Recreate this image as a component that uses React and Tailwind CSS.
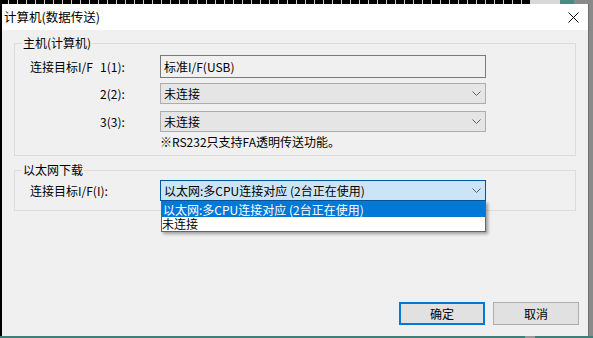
import React from "react";

const Chevron = () => (
  <svg width="9" height="5" viewBox="0 0 9 5" className="shrink-0">
    <path d="M0.5 0.5 L4.5 4.5 L8.5 0.5" fill="none" stroke="#606060" strokeWidth="1" />
  </svg>
);

const Combo = ({ text, focused }) => (
  <div
    className={`w-[326px] h-[21px] flex items-center justify-between pl-[3px] pr-[4px] border ${
      focused ? "bg-[#cce4f7] border-[#005499]" : "bg-[#e5e5e5] border-[#adadad]"
    }`}
  >
    <span className="leading-[16px] text-black">{text}</span>
    <Chevron />
  </div>
);

export default function App() {
  return (
    <div className="w-[593px] h-[338px] flex flex-col bg-black font-['Noto_Sans_CJK_SC',sans-serif] text-[12px] text-black overflow-hidden">
      {/* desktop strip above the window */}
      <div className="h-[4px] flex">
        <div className="w-[530px] bg-[repeating-linear-gradient(90deg,#000_0px,#000_8px,#cfcfcf_8px,#cfcfcf_9px)]" />
        <div className="w-[30px] bg-[#d8d8d8]" />
        <div className="w-[14px] bg-[#4a8a84]" />
        <div className="flex-1 bg-[#8a8a8a]" />
      </div>

      <div className="flex flex-1 min-h-0">
        <div className="w-[2px] bg-black" />

        {/* dialog window */}
        <div className="w-[587px] flex flex-col border-r border-[#6e6e6e]">
          {/* title bar */}
          <div className="h-[26px] bg-white flex items-center justify-between pl-[2px] pr-[9px]">
            <span className="text-[12.5px] leading-[16px]">计算机(数据传送)</span>
            <svg width="11" height="11" viewBox="0 0 11 11">
              <path d="M0.5 0.5 L10.5 10.5 M10.5 0.5 L0.5 10.5" stroke="#000" strokeWidth="1" />
            </svg>
          </div>

          {/* client area */}
          <div className="flex-1 bg-[#f0f0f0] flex flex-col">
            <fieldset className="mx-[12px] mt-[5px] border border-[#dcdcdc] pb-[5px]">
              <legend className="ml-[7px] px-[1px] leading-[16px]">主机(计算机)</legend>

              <div className="flex items-center mt-[4px] pl-[15px]">
                <span className="w-[70px] leading-[16px]">连接目标I/F</span>
                <span className="w-[60px] leading-[16px]">1(1):</span>
                <div className="w-[326px] h-[23px] flex items-center pl-[3px] bg-[#f0f0f0] border border-[#7a7a7a]">
                  <span className="leading-[16px]">标准I/F(USB)</span>
                </div>
              </div>

              <div className="flex items-center mt-[5px] pl-[15px]">
                <span className="w-[70px]" />
                <span className="w-[60px] leading-[16px]">2(2):</span>
                <Combo text="未连接" />
              </div>

              <div className="flex items-center mt-[7px] pl-[15px]">
                <span className="w-[70px]" />
                <span className="w-[60px] leading-[16px]">3(3):</span>
                <Combo text="未连接" />
              </div>

              <div className="mt-[2px] pl-[145px] leading-[16px]">※RS232只支持FA透明传送功能。</div>
            </fieldset>

            <fieldset className="mx-[12px] mt-[6px] border border-[#dcdcdc] pb-[9px]">
              <legend className="ml-[7px] px-[1px] leading-[16px]">以太网下载</legend>

              <div className="flex items-center mt-[2px] pl-[15px]">
                <span className="w-[130px] leading-[16px]">连接目标I/F(I):</span>
                <div className="relative">
                  <Combo text="以太网:多CPU连接对应 (2台正在使用)" focused />
                  {/* open dropdown list */}
                  <div className="absolute left-[1px] top-full w-[325px] z-10 bg-white border border-[#646464] shadow-[2px_2px_3px_rgba(0,0,0,0.35)]">
                    <div className="h-[15px] bg-[#0078d7] text-white leading-[15px] pl-[1px]">
                      以太网:多CPU连接对应 (2台正在使用)
                    </div>
                    <div className="h-[14px] leading-[14px]">未连接</div>
                  </div>
                </div>
              </div>
            </fieldset>

            {/* buttons */}
            <div className="mt-auto flex justify-end gap-[8px] pr-[9px] pb-[11px]">
              <button className="w-[86px] h-[23px] bg-[#e1e1e1] border-2 border-[#0078d7] leading-[16px]">确定</button>
              <button className="w-[86px] h-[23px] bg-[#e1e1e1] border border-[#adadad] leading-[16px]">取消</button>
            </div>
          </div>
        </div>

        <div className="flex-1 bg-[#8a8a8a]" />
      </div>

      <div className="h-[2px] flex">
        <div className="w-[525px] bg-[#3f7f78]" />
        <div className="w-[10px] bg-[#9a9a9a]" />
        <div className="flex-1 bg-[#3f7f78]" />
      </div>
    </div>
  );
}
